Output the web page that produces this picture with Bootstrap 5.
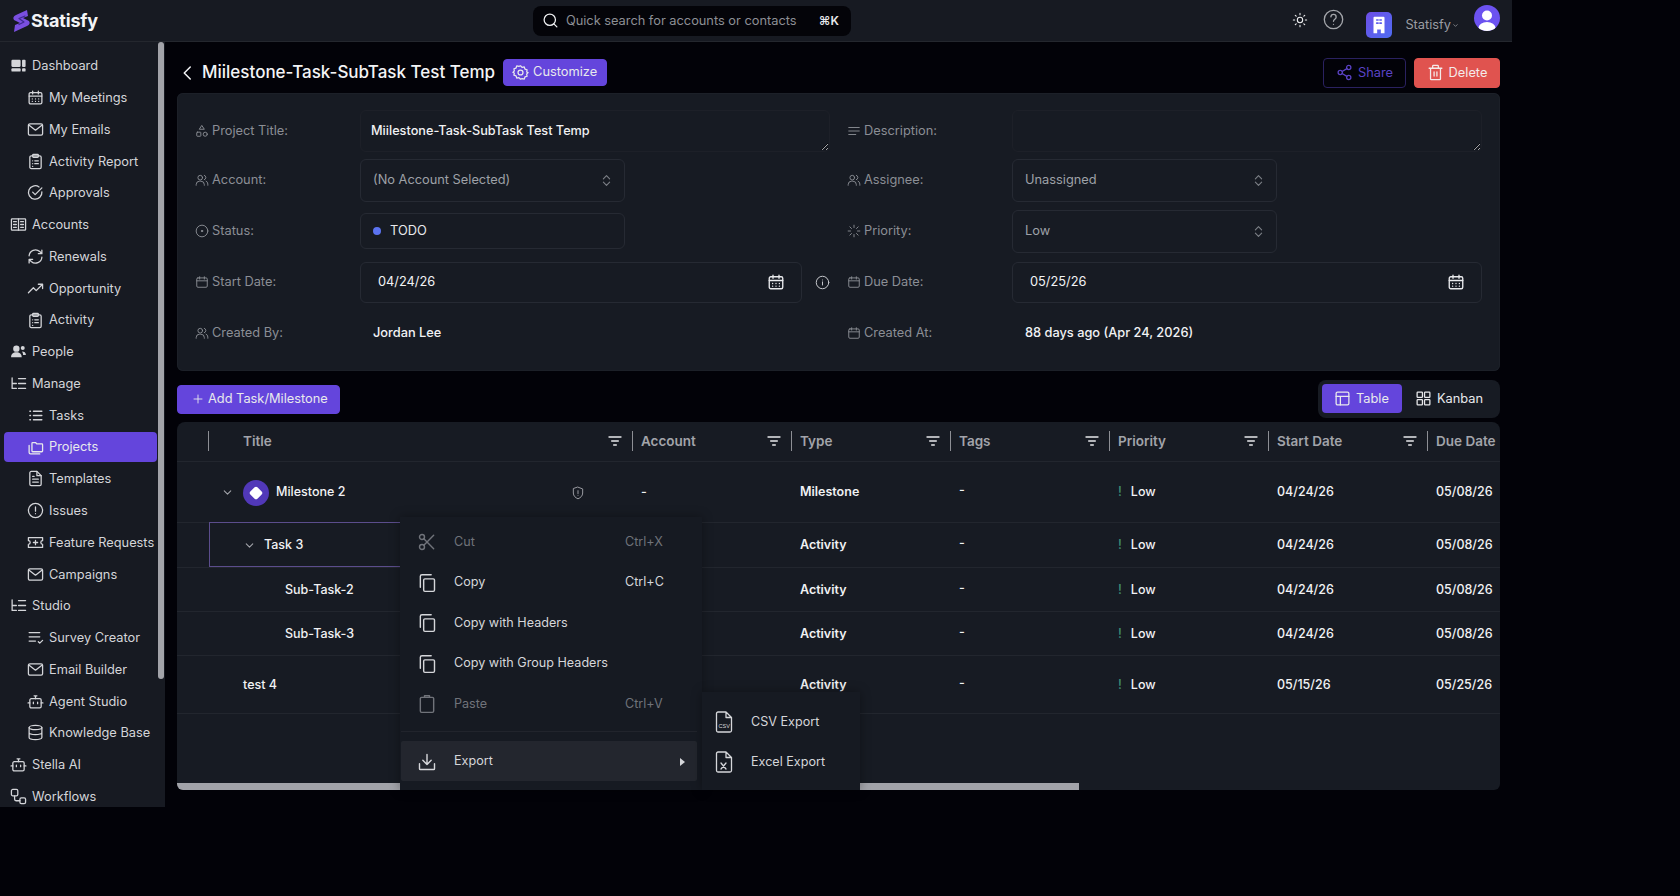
<!DOCTYPE html>
<html lang="en" data-bs-theme="dark">
<head>
    <meta charset="UTF-8">
    <meta name="viewport" content="width=device-width, initial-scale=1.0">
    <title>Statisfy - Project</title>
    <link href="https://cdn.jsdelivr.net/npm/bootstrap@5.3.0/dist/css/bootstrap.min.css" rel="stylesheet">
    <style>
        body { background-color: #020208; font-family: Inter, "Liberation Sans", sans-serif; font-size: 12.8px; color: #e8e9ec; }
        .ico { width: 17px; height: 17px; flex: none; fill: none; stroke: currentColor; stroke-width: 1.8; stroke-linecap: round; stroke-linejoin: round; }

        .app-shell { width: 1512px; height: 807px; overflow: hidden; }
        .top-bar { height: 42px; background-color: #171a22; border-bottom: 1px solid #24272e; padding: 0 12px 0 12px; }
        .brand-ico { width: 19px; height: 22px; }
        .brand-name { font-size: 18px; font-weight: 700; color: #f3f4f6; letter-spacing: -.2px; }
        .quick-search { width: 318px; height: 30px; margin-left: 435px; margin-right: auto; background-color: #040409; border-radius: 8px; padding: 0 12px 0 9px; color: #8d8f95; }
        .quick-search .ico { color: #f0f1f3; margin-right: 7px; }
        .quick-key { color: #e8e9ec; font-size: 12px; font-weight: 600; margin-left: auto; }
        .help-ico { width: 21px; height: 21px; color: #a4a6ab; margin-left: 15px; margin-top: -2px; stroke-width: 1.5; }
        .sun-ico { width: 16px; height: 16px; color: #f0f1f3; margin-top: -2px; stroke-width: 1.6; }
        .org-tile { width: 26px; height: 26px; margin-left: 22px; margin-top: 8px; border-radius: 5px; background: linear-gradient(135deg, #6d4ee6, #4f6cf2); color: #fff; }
        .org-tile .ico { width: 22px; height: 22px; }
        .org-name { color: #9b9da3; margin-left: 13px; margin-top: 8px; }
        .org-caret { width: 7px; height: 7px; color: #9b9da3; margin-left: 1px; margin-top: 9px; stroke-width: 2.5; margin-right: 15px; }
        .user-pic { width: 26px; height: 26px; margin-top: -5px; border-radius: 50%; background-color: #6c52f0; overflow: hidden; }

        .app-body { height: 765px; }
        .side-panel { width: 165px; flex: none; background-color: #171a22; padding-top: 8px; overflow: hidden; }
        .side-panel .nav-link { height: 31.77px; flex: none; width: 153px; margin-left: 4px; padding: 0 0 0 6px; display: flex; align-items: center; gap: 5px; color: #d4d5d9; border-radius: 4px; white-space: nowrap; }
        .side-panel .side-sub { padding-left: 23px; }
        .side-panel .nav-link.active { background-color: #6445dc; color: #e8e9ec; height: 30px; margin-top: .88px; margin-bottom: .89px; }
        .side-thumb { position: absolute; left: 158px; top: 0; width: 6px; height: 637px; background-color: #a2a3a9; border-radius: 3px; }

        .main-area { padding: 0 12px; min-width: 0; }
        .page-head { height: 51px; padding-top: 10px; }
        .page-title { font-size: 17px; font-weight: 500; color: #f3f4f6; margin: 0 8px 0 0; }
        .back-ico { width: 18px; height: 18px; color: #f3f4f6; margin: 0 5px 0 2px; stroke-width: 2; }
        .btn-violet { --bs-btn-bg: #6445dc; --bs-btn-border-color: #6445dc; --bs-btn-hover-bg: #6445dc; --bs-btn-hover-border-color: #6445dc; --bs-btn-color: #e8e9ec; --bs-btn-font-size: 12.8px; --bs-btn-border-radius: 4px; display: inline-flex; align-items: center; gap: 5px; }
        .btn-customize { height: 27px; width: 104px; padding: 0 0 0 8px; margin-top: -1px; gap: 4px; }
        .btn-share { --bs-btn-color: #5a42c4; --bs-btn-border-color: #2a2160; --bs-btn-font-size: 12.8px; --bs-btn-border-radius: 4px; height: 30px; width: 83px; padding: 0; display: inline-flex; align-items: center; justify-content: center; gap: 5px; }
        .btn-remove { --bs-btn-bg: #e0534f; --bs-btn-border-color: #e0534f; --bs-btn-color: #f4eaea; --bs-btn-font-size: 12.8px; --bs-btn-border-radius: 4px; height: 30px; width: 86px; padding: 0; display: inline-flex; align-items: center; justify-content: center; gap: 5px; }

        .detail-panel { height: 278px; background-color: #171b23; border-radius: 6px; padding: 17px 18px 0 18px; box-shadow: inset 0 0 0 1px #1c2028; }
        .detail-row { --bs-gutter-x: 17px; margin-bottom: 9px; }
        .detail-row-first { margin-bottom: 7px; }
        .field { height: 42px; }
        .field-label { width: 165px; flex: none; color: #8b8e95; display: flex; align-items: center; gap: 3px; }
        .field-label .ico { width: 14px; height: 14px; stroke-width: 1.6; }
        .title-area { height: 42px; flex: 1; background-color: transparent; border: 1px solid #1d2028; border-radius: 6px; padding: 10px 10px 0; color: #f1f2f4; font-size: 12.7px; font-weight: 500; line-height: 20px; }
        .title-area:focus { background-color: transparent; border-color: #1d2028; box-shadow: none; color: #f1f2f4; }
        .pick-box { width: 265px; height: 43px; background-color: transparent; border: 1px solid #262a33; border-radius: 6px; padding: 0 12px; color: #9ea1a7; font-size: 12.8px; background-position: right 12px center; background-size: 11px; background-image: url("data:image/svg+xml,%3Csvg xmlns='http://www.w3.org/2000/svg' viewBox='0 0 14 16' fill='none' stroke='%237d8087' stroke-width='1.4' stroke-linecap='round' stroke-linejoin='round'%3E%3Cpath d='M3 6l4-4 4 4M3 10l4 4 4-4'/%3E%3C/svg%3E"); }
        .status-box { width: 265px; height: 36px; border: 1px solid #262a33; border-radius: 6px; padding: 0 12px; color: #e8e9ec; gap: 9px; }
        .status-dot { width: 8px; height: 8px; border-radius: 50%; background-color: #5b73f0; }
        .date-box { flex: 1; height: 41px; border: 1px solid #262a33; border-radius: 6px; padding: 0 16px 0 17px; color: #f1f2f4; }
        .date-box .ico { color: #e8e9ec; width: 18px; height: 18px; stroke-width: 1.8; margin-left: auto; }
        .info-ico { color: #c5c7cb; width: 15px; height: 15px; margin-left: 13px; stroke-width: 1.6; }
        .plain-value { padding-left: 13px; color: #f1f2f4; font-weight: 500; }

        .tool-row { margin-top: 9px; height: 38px; }
        .btn-add { height: 29px; width: 163px; padding: 0 0 0 14px; gap: 4px; }
        .view-switch { width: 182px; height: 38px; background-color: #171b23; border-radius: 8px; padding: 4px; }
        .view-btn { height: 29px; display: inline-flex; align-items: center; gap: 5px; border-radius: 4px; color: #e8e9ec; padding-left: 13px; }
        .view-btn.is-on { background-color: #6445dc; width: 80px; padding-left: 12px; }

        .grid-card { height: 368px; margin-top: 4px; background-color: #171b23; border-radius: 8px 8px 6px 6px; overflow: hidden; position: relative; }
        .work-table { --bs-table-bg: transparent; --bs-table-color: #f1f2f4; --bs-table-border-color: #22262e; table-layout: fixed; width: 1410px; margin: 0; font-size: 12.5px; }
        .work-table th, .work-table td { padding: 0 0 0 8px; vertical-align: middle; font-weight: 500; white-space: nowrap; }
        .work-table td { padding-top: 2px; }
        .work-table th { height: 39px; color: #a2a4aa; font-weight: 600; font-size: 13.5px; }
        .work-table th:first-child, .work-table td:first-child { padding: 0; }
        .head-cell { display: flex; align-items: center; height: 20px; border-right: 1px solid #8d8f95; padding-right: 9px; justify-content: space-between; }
        .head-cell .ico { width: 16px; height: 16px; color: #e8e9ec; stroke-width: 2; }
        .head-gap { height: 20px; border-right: 1px solid #8d8f95; }
        .title-head { padding-left: 34px !important; }
        .row-h1 td { height: 61px; }
        .row-h2 td { height: 45px; }
        .row-h3 td { height: 44px; }
        .row-h4 td { height: 58px; }
        .row-focus { outline: 1px solid #5b4d8c; outline-offset: -1px; }
        .title-cell { display: flex; align-items: center; }
        .fold-ico { width: 13px; height: 13px; color: #a2a4aa; stroke-width: 2; }
        .ms-badge { width: 26px; height: 26px; border-radius: 50%; background-color: #5138b8; margin: 0 7px 0 9px; }
        .ms-diamond { width: 10px; height: 10px; background-color: #fff; border-radius: 2px; transform: rotate(45deg); }
        .shield-ico { width: 14px; height: 14px; color: #a2a4aa; stroke-width: 1.6; margin-left: auto; margin-right: 48px; }
        .lvl-0 { padding-left: 4px; }
        .lvl-1 { padding-left: 26px; }
        .lvl-2 { padding-left: 68px; }
        .lvl-3 { padding-left: 26px; }
        .bump-dash { position: relative; top: -2px; }
        .prio-mark { color: #3f8f74; margin-right: 9px; }
        .type-cell { font-weight: 600 !important; }
        .h-thumb { position: absolute; left: 0; bottom: 0; width: 902px; height: 7px; background-color: #a2a3a9; }

        .ctx-menu { --bs-dropdown-bg: #161a22; --bs-dropdown-border-width: 0; --bs-dropdown-border-radius: 0; --bs-dropdown-link-color: #d5d6da; --bs-dropdown-link-hover-bg: transparent; --bs-dropdown-link-hover-color: #d5d6da; --bs-dropdown-link-disabled-color: #70737a; --bs-dropdown-font-size: 12.6px; box-shadow: 0 0 10px rgba(0,0,0,.35); }
        .ctx-main { left: 400px; top: 517px; width: 302px; height: 273px; padding: 4px 5px 0 1px; }
        .ctx-sub { left: 702px; top: 692px; width: 158px; height: 98px; padding: 10px 0 0; min-width: 0; }
        .ctx-main .dropdown-item { height: 40.5px; padding: 2px 0 0 16px; display: flex; align-items: center; gap: 17px; }
        .ctx-main .dropdown-item .ico { width: 20px; height: 20px; stroke-width: 1.7; }
        .ctx-main .dropdown-divider { margin: 7px 0 9px; border-color: #21242c; opacity: 1; }
        .ctx-main .ctx-hot { background-color: #23262e; border-radius: 2px; height: 40px; }
        .ctx-key { margin-left: auto; width: 72px; }
        .ctx-caret { margin-left: auto; margin-right: 12px; width: 0; height: 0; border-left: 5px solid #d5d6da; border-top: 4px solid transparent; border-bottom: 4px solid transparent; }
        .ctx-sub .dropdown-item { height: 40px; padding: 0 0 0 10px; display: flex; align-items: center; gap: 15px; }
        .ctx-sub .dropdown-item .ico { width: 24px; height: 24px; stroke-width: 1.3; }
        .csv-label { font-family: "Liberation Sans", sans-serif; font-size: 5.5px; fill: currentColor; stroke: none; }
    </style>
</head>
<body>
    <svg width="0" height="0" class="position-absolute">
        <symbol id="i-dash" viewBox="0 0 24 24"><rect x="2" y="4" width="13" height="10" rx="1.5" fill="currentColor" stroke="none"/><rect x="17" y="4" width="5" height="10" rx="1.2" fill="currentColor" stroke="none"/><rect x="2" y="16" width="13" height="4.5" rx="1.2" fill="currentColor" stroke="none"/><rect x="17" y="16" width="5" height="4.5" rx="1.2" fill="currentColor" stroke="none"/></symbol>
        <symbol id="i-cal" viewBox="0 0 24 24"><rect x="3" y="5" width="18" height="16" rx="2"/><path d="M3 10h18M8 3v4M16 3v4"/></symbol>
        <symbol id="i-cal-days" viewBox="0 0 24 24"><rect x="3" y="5" width="18" height="16" rx="2"/><path d="M3 10h18M8 3v4M16 3v4M7.5 14h.01M12 14h.01M16.5 14h.01M7.5 17.5h.01M12 17.5h.01M16.5 17.5h.01"/></symbol>
        <symbol id="i-mail" viewBox="0 0 24 24"><rect x="2" y="4" width="20" height="16" rx="2"/><path d="M3 6l9 7 9-7"/></symbol>
        <symbol id="i-clip" viewBox="0 0 24 24"><rect x="4" y="4" width="16" height="18" rx="2"/><rect x="8" y="2" width="8" height="4" rx="1"/><path d="M8 11h.01M8 15h.01M8 19h.01M11 11h5M11 15h5"/></symbol>
        <symbol id="i-check" viewBox="0 0 24 24"><path d="M21 11a9.5 9.5 0 1 1-4-6.8"/><path d="M8 11.5l3.5 3.5L21 5.5"/></symbol>
        <symbol id="i-book" viewBox="0 0 24 24"><rect x="2" y="4" width="20" height="16" rx="1"/><path d="M12 4v16M5 8h4M5 12h4M5 16h4M15 8h4M15 12h4M15 16h4"/></symbol>
        <symbol id="i-sync" viewBox="0 0 24 24"><path d="M3 11a9 9 0 0 1 15-6l3 3M21 3v5h-5M21 13a9 9 0 0 1-15 6l-3-3M3 21v-5h5"/></symbol>
        <symbol id="i-trend" viewBox="0 0 24 24"><path d="M2 18l7-7 4 4 9-9M16 6h6v6"/></symbol>
        <symbol id="i-people" viewBox="0 0 24 24"><circle cx="9" cy="8" r="4.5" fill="currentColor" stroke="none"/><path d="M1.5 20c0-4.5 3-7 7.5-7s7.5 2.5 7.5 7z" fill="currentColor" stroke="none"/><circle cx="18" cy="7" r="2.8" fill="currentColor" stroke="none"/><path d="M17 12c3 0 5.5 1.5 5.5 5h-4c0-2-.5-3.5-1.5-5z" fill="currentColor" stroke="none"/></symbol>
        <symbol id="i-manage" viewBox="0 0 24 24"><path d="M3 4v15M3 12h6M3 19h6M12 5h10M12 12h10M12 19h10"/></symbol>
        <symbol id="i-list" viewBox="0 0 24 24"><path d="M9 6h12M9 12h12M9 18h12M4 6h1M4 12h1M4 18h1"/></symbol>
        <symbol id="i-folders" viewBox="0 0 24 24"><path d="M7 9V6a1 1 0 0 1 1-1h4l2 2h7a1 1 0 0 1 1 1v9a1 1 0 0 1-1 1H8a1 1 0 0 1-1-1z"/><path d="M3 9v10a2 2 0 0 0 2 2h13"/></symbol>
        <symbol id="i-file" viewBox="0 0 24 24"><path d="M14 2H6a2 2 0 0 0-2 2v16a2 2 0 0 0 2 2h12a2 2 0 0 0 2-2V8z"/><path d="M14 2v6h6M8 13h8M8 17h8M8 9h2"/></symbol>
        <symbol id="i-alert" viewBox="0 0 24 24"><circle cx="12" cy="12" r="10"/><path d="M12 7v6M12 16.5h.01"/></symbol>
        <symbol id="i-ticket" viewBox="0 0 24 24"><path d="M2 5h20v4.5a2.5 2.5 0 0 0 0 5V19H2v-4.5a2.5 2.5 0 0 0 0-5z"/><path d="M12 9v6M9 12h6"/></symbol>
        <symbol id="i-survey" viewBox="0 0 24 24"><path d="M3 5h15M3 11h15M3 17h9M16 18l2 2 4-4"/></symbol>
        <symbol id="i-bot" viewBox="0 0 24 24"><rect x="4" y="8" width="16" height="13" rx="2"/><path d="M12 8V4M10 4h4M1.5 14H4M20 14h2.5M9 13v2M15 13v2"/></symbol>
        <symbol id="i-db" viewBox="0 0 24 24"><ellipse cx="12" cy="5" rx="9" ry="3"/><path d="M3 5v14c0 1.7 4 3 9 3s9-1.3 9-3V5M3 12c0 1.7 4 3 9 3s9-1.3 9-3"/></symbol>
        <symbol id="i-flow" viewBox="0 0 24 24"><rect x="2" y="2" width="9" height="9" rx="2"/><rect x="14" y="14" width="8" height="8" rx="2"/><path d="M6.5 11v5a2 2 0 0 0 2 2H14"/></symbol>
        <symbol id="i-bolt" viewBox="0 0 19 22"><path d="M15 0L4 5Q0 7 2 10L8 13 3 15 2 22 15 16Q19 14 17 11L11 8 16 6z" fill="#7a4fe0" stroke="none"/><path d="M13 6L7 8.5 12 12 7 14.5" fill="none" stroke="#3f2a90" stroke-width="1.2"/></symbol>
        <symbol id="i-search" viewBox="0 0 24 24"><circle cx="11" cy="11" r="8"/><path d="M21 21l-4.3-4.3"/></symbol>
        <symbol id="i-sun" viewBox="0 0 24 24"><circle cx="12" cy="12" r="4"/><path d="M12 2v2M12 20v2M4.9 4.9l1.4 1.4M17.7 17.7l1.4 1.4M2 12h2M20 12h2M4.9 19.1l1.4-1.4M17.7 6.3l1.4-1.4"/></symbol>
        <symbol id="i-help" viewBox="0 0 24 24"><circle cx="12" cy="12" r="10.5"/><path d="M9 9a3 3 0 0 1 6 .5c0 2-3 2.5-3 4.5M12 17.5h.01"/></symbol>
        <symbol id="i-down" viewBox="0 0 24 24"><path d="M6 9l6 6 6-6"/></symbol>
        <symbol id="i-back" viewBox="0 0 24 24"><path d="M15 4l-8 8 8 8"/></symbol>
        <symbol id="i-gear" viewBox="0 0 24 24"><path d="M12 2.5l2.2 2.3 3.1-.6 1 3 3 1-.6 3.1 2 .7-2 2.2.6 3.1-3 1-1 3-3.1-.6L12 21.500l-2.2-2.3-3.1.6-1-3-3-1 .6-3.1-2-.7 2-2.2-.6-3.1 3-1 1-3 3.1.6z"/><circle cx="12" cy="12" r="3.5"/></symbol>
        <symbol id="i-share" viewBox="0 0 24 24"><circle cx="18" cy="5" r="3"/><circle cx="6" cy="12" r="3"/><circle cx="18" cy="19" r="3"/><path d="M8.6 13.5l6.8 4M15.4 6.5l-6.8 4"/></symbol>
        <symbol id="i-trash" viewBox="0 0 24 24"><path d="M3 6h18M8 6V3a1 1 0 0 1 1-1h6a1 1 0 0 1 1 1v3M5 6v15a1 1 0 0 0 1 1h12a1 1 0 0 0 1-1V6M10 11v6M14 11v6"/></symbol>
        <symbol id="i-shapes" viewBox="0 0 24 24"><path d="M12 3l4 6H8z"/><rect x="3" y="14" width="7" height="7" rx="1"/><circle cx="17.5" cy="17.5" r="3.5"/></symbol>
        <symbol id="i-users" viewBox="0 0 24 24"><circle cx="9" cy="8" r="4"/><path d="M2 21v-1a6 6 0 0 1 6-6h2a6 6 0 0 1 6 6v1M16 4a4 4 0 0 1 0 7.5M19 14a5 5 0 0 1 3 5v2"/></symbol>
        <symbol id="i-target" viewBox="0 0 24 24"><circle cx="12" cy="12" r="10"/><circle cx="12" cy="12" r="1.2" fill="currentColor"/></symbol>
        <symbol id="i-align" viewBox="0 0 24 24"><path d="M3 6h18M3 12h18M3 18h12"/></symbol>
        <symbol id="i-load" viewBox="0 0 24 24"><path d="M12 2v4M12 18v4M4.9 4.9l2.8 2.8M16.3 16.3l2.8 2.8M2 12h4M18 12h4M4.9 19.1l2.8-2.8M16.3 7.7l2.8-2.8"/></symbol>
        <symbol id="i-info" viewBox="0 0 24 24"><circle cx="12" cy="12" r="10"/><path d="M12 16v-5M12 8h.01"/></symbol>
        <symbol id="i-plus" viewBox="0 0 24 24"><path d="M12 4v16M4 12h16"/></symbol>
        <symbol id="i-table" viewBox="0 0 24 24"><rect x="3" y="3" width="18" height="18" rx="2"/><path d="M3 9h18M9 9v12"/></symbol>
        <symbol id="i-grid" viewBox="0 0 24 24"><rect x="3" y="3" width="7.5" height="7.5" rx="1"/><rect x="13.5" y="3" width="7.5" height="7.5" rx="1"/><rect x="3" y="13.5" width="7.5" height="7.5" rx="1"/><rect x="13.5" y="13.5" width="7.5" height="7.5" rx="1"/></symbol>
        <symbol id="i-filter" viewBox="0 0 24 24"><path d="M3 6h18M7 12h10M10 18h4"/></symbol>
        <symbol id="i-shield" viewBox="0 0 24 24"><path d="M12 2l8 3v7c0 5-3.5 8-8 10-4.5-2-8-5-8-10V5z"/><path d="M12 8v5M12 16h.01"/></symbol>
        <symbol id="i-cut" viewBox="0 0 24 24"><circle cx="6" cy="6" r="3"/><circle cx="6" cy="18" r="3"/><path d="M8.2 8.2L20 20M8.2 15.8L20 4"/></symbol>
        <symbol id="i-copy" viewBox="0 0 24 24"><rect x="8" y="7" width="13" height="15" rx="1.5"/><path d="M4 17V4a2 2 0 0 1 2-2h11"/></symbol>
        <symbol id="i-paste" viewBox="0 0 24 24"><rect x="4" y="4" width="16" height="18" rx="1.5"/><path d="M9 4V2h6v2"/></symbol>
        <symbol id="i-save" viewBox="0 0 24 24"><path d="M12 3v12M7 10l5 5 5-5M3 14v6a1 1 0 0 0 1 1h16a1 1 0 0 0 1-1v-6"/></symbol>
        <symbol id="i-building" viewBox="0 0 24 24"><path d="M6 21V4a1 1 0 0 1 1-1h10a1 1 0 0 1 1 1v17h-4v-4h-4v4z" fill="currentColor" stroke="none"/><path d="M9.5 6.5h1.5M13 6.5h1.5M9.5 10h1.5M13 10h1.5" stroke="#5b5ced" stroke-width="1.8"/></symbol>
    </svg>

    <div class="app-shell position-relative">
        <header class="top-bar d-flex align-items-center">
            <svg class="ico brand-ico"><use href="#i-bolt"/></svg>
            <span class="brand-name">Statisfy</span>
            <div class="quick-search d-flex align-items-center">
                <svg class="ico"><use href="#i-search"/></svg>
                <span>Quick search for accounts or contacts</span>
                <span class="quick-key">⌘K</span>
            </div>
            <svg class="ico sun-ico"><use href="#i-sun"/></svg>
            <svg class="ico help-ico"><use href="#i-help"/></svg>
            <div class="org-tile d-flex align-items-center justify-content-center">
                <svg class="ico"><use href="#i-building"/></svg>
            </div>
            <span class="org-name">Statisfy</span>
            <svg class="ico org-caret"><use href="#i-down"/></svg>
            <div class="user-pic d-flex justify-content-center">
                <svg width="26" height="26" viewBox="0 0 26 26"><circle cx="13" cy="10.5" r="5" fill="#fff"/><ellipse cx="13" cy="23" rx="8.5" ry="6" fill="#fff"/></svg>
            </div>
        </header>

        <div class="app-body d-flex">
            <aside class="side-panel position-relative">
                <nav class="nav flex-column flex-nowrap">
                    <a class="nav-link" href="#"><svg class="ico"><use href="#i-dash"/></svg>Dashboard</a>
                    <a class="nav-link side-sub" href="#"><svg class="ico"><use href="#i-cal-days"/></svg>My Meetings</a>
                    <a class="nav-link side-sub" href="#"><svg class="ico"><use href="#i-mail"/></svg>My Emails</a>
                    <a class="nav-link side-sub" href="#"><svg class="ico"><use href="#i-clip"/></svg>Activity Report</a>
                    <a class="nav-link side-sub" href="#"><svg class="ico"><use href="#i-check"/></svg>Approvals</a>
                    <a class="nav-link" href="#"><svg class="ico"><use href="#i-book"/></svg>Accounts</a>
                    <a class="nav-link side-sub" href="#"><svg class="ico"><use href="#i-sync"/></svg>Renewals</a>
                    <a class="nav-link side-sub" href="#"><svg class="ico"><use href="#i-trend"/></svg>Opportunity</a>
                    <a class="nav-link side-sub" href="#"><svg class="ico"><use href="#i-clip"/></svg>Activity</a>
                    <a class="nav-link" href="#"><svg class="ico"><use href="#i-people"/></svg>People</a>
                    <a class="nav-link" href="#"><svg class="ico"><use href="#i-manage"/></svg>Manage</a>
                    <a class="nav-link side-sub" href="#"><svg class="ico"><use href="#i-list"/></svg>Tasks</a>
                    <a class="nav-link side-sub active" href="#"><svg class="ico"><use href="#i-folders"/></svg>Projects</a>
                    <a class="nav-link side-sub" href="#"><svg class="ico"><use href="#i-file"/></svg>Templates</a>
                    <a class="nav-link side-sub" href="#"><svg class="ico"><use href="#i-alert"/></svg>Issues</a>
                    <a class="nav-link side-sub" href="#"><svg class="ico"><use href="#i-ticket"/></svg>Feature Requests</a>
                    <a class="nav-link side-sub" href="#"><svg class="ico"><use href="#i-mail"/></svg>Campaigns</a>
                    <a class="nav-link" href="#"><svg class="ico"><use href="#i-manage"/></svg>Studio</a>
                    <a class="nav-link side-sub" href="#"><svg class="ico"><use href="#i-survey"/></svg>Survey Creator</a>
                    <a class="nav-link side-sub" href="#"><svg class="ico"><use href="#i-mail"/></svg>Email Builder</a>
                    <a class="nav-link side-sub" href="#"><svg class="ico"><use href="#i-bot"/></svg>Agent Studio</a>
                    <a class="nav-link side-sub" href="#"><svg class="ico"><use href="#i-db"/></svg>Knowledge Base</a>
                    <a class="nav-link" href="#"><svg class="ico"><use href="#i-bot"/></svg>Stella AI</a>
                    <a class="nav-link" href="#"><svg class="ico"><use href="#i-flow"/></svg>Workflows</a>
                </nav>
                <div class="side-thumb"></div>
            </aside>

            <main class="main-area flex-grow-1">
                <div class="page-head d-flex align-items-center">
                    <svg class="ico back-ico"><use href="#i-back"/></svg>
                    <h1 class="page-title">Miilestone-Task-SubTask Test Temp</h1>
                    <button class="btn btn-violet btn-customize"><svg class="ico"><use href="#i-gear"/></svg>Customize</button>
                    <button class="btn btn-share ms-auto me-2"><svg class="ico"><use href="#i-share"/></svg>Share</button>
                    <button class="btn btn-remove"><svg class="ico"><use href="#i-trash"/></svg>Delete</button>
                </div>

                <section class="detail-panel">
                    <div class="row detail-row detail-row-first">
                        <div class="col-6"><div class="field d-flex align-items-center">
                            <label class="field-label"><svg class="ico"><use href="#i-shapes"/></svg>Project Title:</label>
                            <textarea class="form-control title-area">Miilestone-Task-SubTask Test Temp</textarea>
                        </div></div>
                        <div class="col-6"><div class="field d-flex align-items-center">
                            <label class="field-label"><svg class="ico"><use href="#i-align"/></svg>Description:</label>
                            <textarea class="form-control title-area"></textarea>
                        </div></div>
                    </div>
                    <div class="row detail-row">
                        <div class="col-6"><div class="field d-flex align-items-center">
                            <label class="field-label"><svg class="ico"><use href="#i-users"/></svg>Account:</label>
                            <select class="form-select pick-box"><option>(No Account Selected)</option></select>
                        </div></div>
                        <div class="col-6"><div class="field d-flex align-items-center">
                            <label class="field-label"><svg class="ico"><use href="#i-users"/></svg>Assignee:</label>
                            <select class="form-select pick-box"><option>Unassigned</option></select>
                        </div></div>
                    </div>
                    <div class="row detail-row">
                        <div class="col-6"><div class="field d-flex align-items-center">
                            <label class="field-label"><svg class="ico"><use href="#i-target"/></svg>Status:</label>
                            <div class="status-box d-flex align-items-center"><span class="status-dot"></span>TODO</div>
                        </div></div>
                        <div class="col-6"><div class="field d-flex align-items-center">
                            <label class="field-label"><svg class="ico"><use href="#i-load"/></svg>Priority:</label>
                            <select class="form-select pick-box"><option>Low</option></select>
                        </div></div>
                    </div>
                    <div class="row detail-row">
                        <div class="col-6"><div class="field d-flex align-items-center">
                            <label class="field-label"><svg class="ico"><use href="#i-cal"/></svg>Start Date:</label>
                            <div class="date-box d-flex align-items-center">04/24/26<svg class="ico"><use href="#i-cal-days"/></svg></div>
                            <svg class="ico info-ico"><use href="#i-info"/></svg>
                        </div></div>
                        <div class="col-6"><div class="field d-flex align-items-center">
                            <label class="field-label"><svg class="ico"><use href="#i-cal"/></svg>Due Date:</label>
                            <div class="date-box d-flex align-items-center">05/25/26<svg class="ico"><use href="#i-cal-days"/></svg></div>
                        </div></div>
                    </div>
                    <div class="row detail-row">
                        <div class="col-6"><div class="field d-flex align-items-center">
                            <label class="field-label"><svg class="ico"><use href="#i-users"/></svg>Created By:</label>
                            <span class="plain-value">Jordan Lee</span>
                        </div></div>
                        <div class="col-6"><div class="field d-flex align-items-center">
                            <label class="field-label"><svg class="ico"><use href="#i-cal"/></svg>Created At:</label>
                            <span class="plain-value">88 days ago (Apr 24, 2026)</span>
                        </div></div>
                    </div>
                </section>

                <div class="tool-row d-flex align-items-center justify-content-between">
                    <button class="btn btn-violet btn-add"><svg class="ico" style="width:12px;height:12px"><use href="#i-plus"/></svg>Add Task/Milestone</button>
                    <div class="view-switch d-flex">
                        <span class="view-btn is-on"><svg class="ico"><use href="#i-table"/></svg>Table</span>
                        <span class="view-btn"><svg class="ico"><use href="#i-grid"/></svg>Kanban</span>
                    </div>
                </div>

                <div class="grid-card">
                    <table class="table work-table">
                        <colgroup>
                            <col style="width:32px"><col style="width:424px"><col style="width:159px"><col style="width:159px"><col style="width:159px"><col style="width:159px"><col style="width:159px"><col style="width:159px">
                        </colgroup>
                        <thead>
                            <tr>
                                <th><div class="head-gap"></div></th>
                                <th class="title-head"><div class="head-cell">Title<svg class="ico"><use href="#i-filter"/></svg></div></th>
                                <th><div class="head-cell">Account<svg class="ico"><use href="#i-filter"/></svg></div></th>
                                <th><div class="head-cell">Type<svg class="ico"><use href="#i-filter"/></svg></div></th>
                                <th><div class="head-cell">Tags<svg class="ico"><use href="#i-filter"/></svg></div></th>
                                <th><div class="head-cell">Priority<svg class="ico"><use href="#i-filter"/></svg></div></th>
                                <th><div class="head-cell">Start Date<svg class="ico"><use href="#i-filter"/></svg></div></th>
                                <th><div class="head-cell">Due Date<svg class="ico"><use href="#i-filter"/></svg></div></th>
                            </tr>
                        </thead>
                        <tbody>
                            <tr class="row-h1">
                                <td></td>
                                <td><div class="title-cell lvl-0"><svg class="ico fold-ico"><use href="#i-down"/></svg><span class="ms-badge d-flex align-items-center justify-content-center"><span class="ms-diamond"></span></span>Milestone 2<svg class="ico shield-ico"><use href="#i-shield"/></svg></div></td>
                                <td>-</td>
                                <td class="type-cell">Milestone</td>
                                <td><span class="bump-dash">-</span></td>
                                <td><span class="prio-mark">!</span>Low</td>
                                <td>04/24/26</td>
                                <td>05/08/26</td>
                            </tr>
                            <tr class="row-h2">
                                <td></td>
                                <td class="row-focus"><div class="title-cell lvl-1"><svg class="ico fold-ico"><use href="#i-down"/></svg><span class="ms-2">Task 3</span></div></td>
                                <td></td>
                                <td class="type-cell">Activity</td>
                                <td><span class="bump-dash">-</span></td>
                                <td><span class="prio-mark">!</span>Low</td>
                                <td>04/24/26</td>
                                <td>05/08/26</td>
                            </tr>
                            <tr class="row-h3">
                                <td></td>
                                <td><div class="title-cell lvl-2">Sub-Task-2</div></td>
                                <td></td>
                                <td class="type-cell">Activity</td>
                                <td><span class="bump-dash">-</span></td>
                                <td><span class="prio-mark">!</span>Low</td>
                                <td>04/24/26</td>
                                <td>05/08/26</td>
                            </tr>
                            <tr class="row-h3">
                                <td></td>
                                <td><div class="title-cell lvl-2">Sub-Task-3</div></td>
                                <td></td>
                                <td class="type-cell">Activity</td>
                                <td><span class="bump-dash">-</span></td>
                                <td><span class="prio-mark">!</span>Low</td>
                                <td>04/24/26</td>
                                <td>05/08/26</td>
                            </tr>
                            <tr class="row-h4">
                                <td></td>
                                <td><div class="title-cell lvl-3">test 4</div></td>
                                <td></td>
                                <td class="type-cell">Activity</td>
                                <td><span class="bump-dash">-</span></td>
                                <td><span class="prio-mark">!</span>Low</td>
                                <td>05/15/26</td>
                                <td>05/25/26</td>
                            </tr>
                        </tbody>
                    </table>
                    <div class="h-thumb"></div>
                </div>
            </main>
        </div>

        <!-- right click menu over the table -->
        <div class="dropdown-menu show ctx-menu ctx-main">
            <a class="dropdown-item disabled" href="#"><svg class="ico"><use href="#i-cut"/></svg>Cut<span class="ctx-key">Ctrl+X</span></a>
            <a class="dropdown-item" href="#"><svg class="ico"><use href="#i-copy"/></svg>Copy<span class="ctx-key">Ctrl+C</span></a>
            <a class="dropdown-item" href="#"><svg class="ico"><use href="#i-copy"/></svg>Copy with Headers</a>
            <a class="dropdown-item" href="#"><svg class="ico"><use href="#i-copy"/></svg>Copy with Group Headers</a>
            <a class="dropdown-item disabled" href="#"><svg class="ico"><use href="#i-paste"/></svg>Paste<span class="ctx-key">Ctrl+V</span></a>
            <hr class="dropdown-divider">
            <a class="dropdown-item ctx-hot" href="#"><svg class="ico"><use href="#i-save"/></svg>Export<span class="ctx-caret"></span></a>
        </div>
        <div class="dropdown-menu show ctx-menu ctx-sub">
            <a class="dropdown-item" href="#"><svg class="ico" viewBox="0 0 24 24"><path d="M14 2H6a1.5 1.5 0 0 0-1.5 1.5v17A1.5 1.5 0 0 0 6 22h12a1.5 1.5 0 0 0 1.5-1.5V7.5zM14 2v5.5h5.5"/><text x="6.5" y="18" class="csv-label">CSV</text></svg>CSV Export</a>
            <a class="dropdown-item" href="#"><svg class="ico" viewBox="0 0 24 24"><path d="M14 2H6a1.5 1.5 0 0 0-1.5 1.5v17A1.5 1.5 0 0 0 6 22h12a1.5 1.5 0 0 0 1.5-1.5V7.5zM14 2v5.5h5.5M9 13l5 6M14 13l-5 6"/></svg>Excel Export</a>
        </div>
    </div>
    <script src="https://cdn.jsdelivr.net/npm/bootstrap@5.3.0/dist/js/bootstrap.bundle.min.js"></script>
</body>
</html>
